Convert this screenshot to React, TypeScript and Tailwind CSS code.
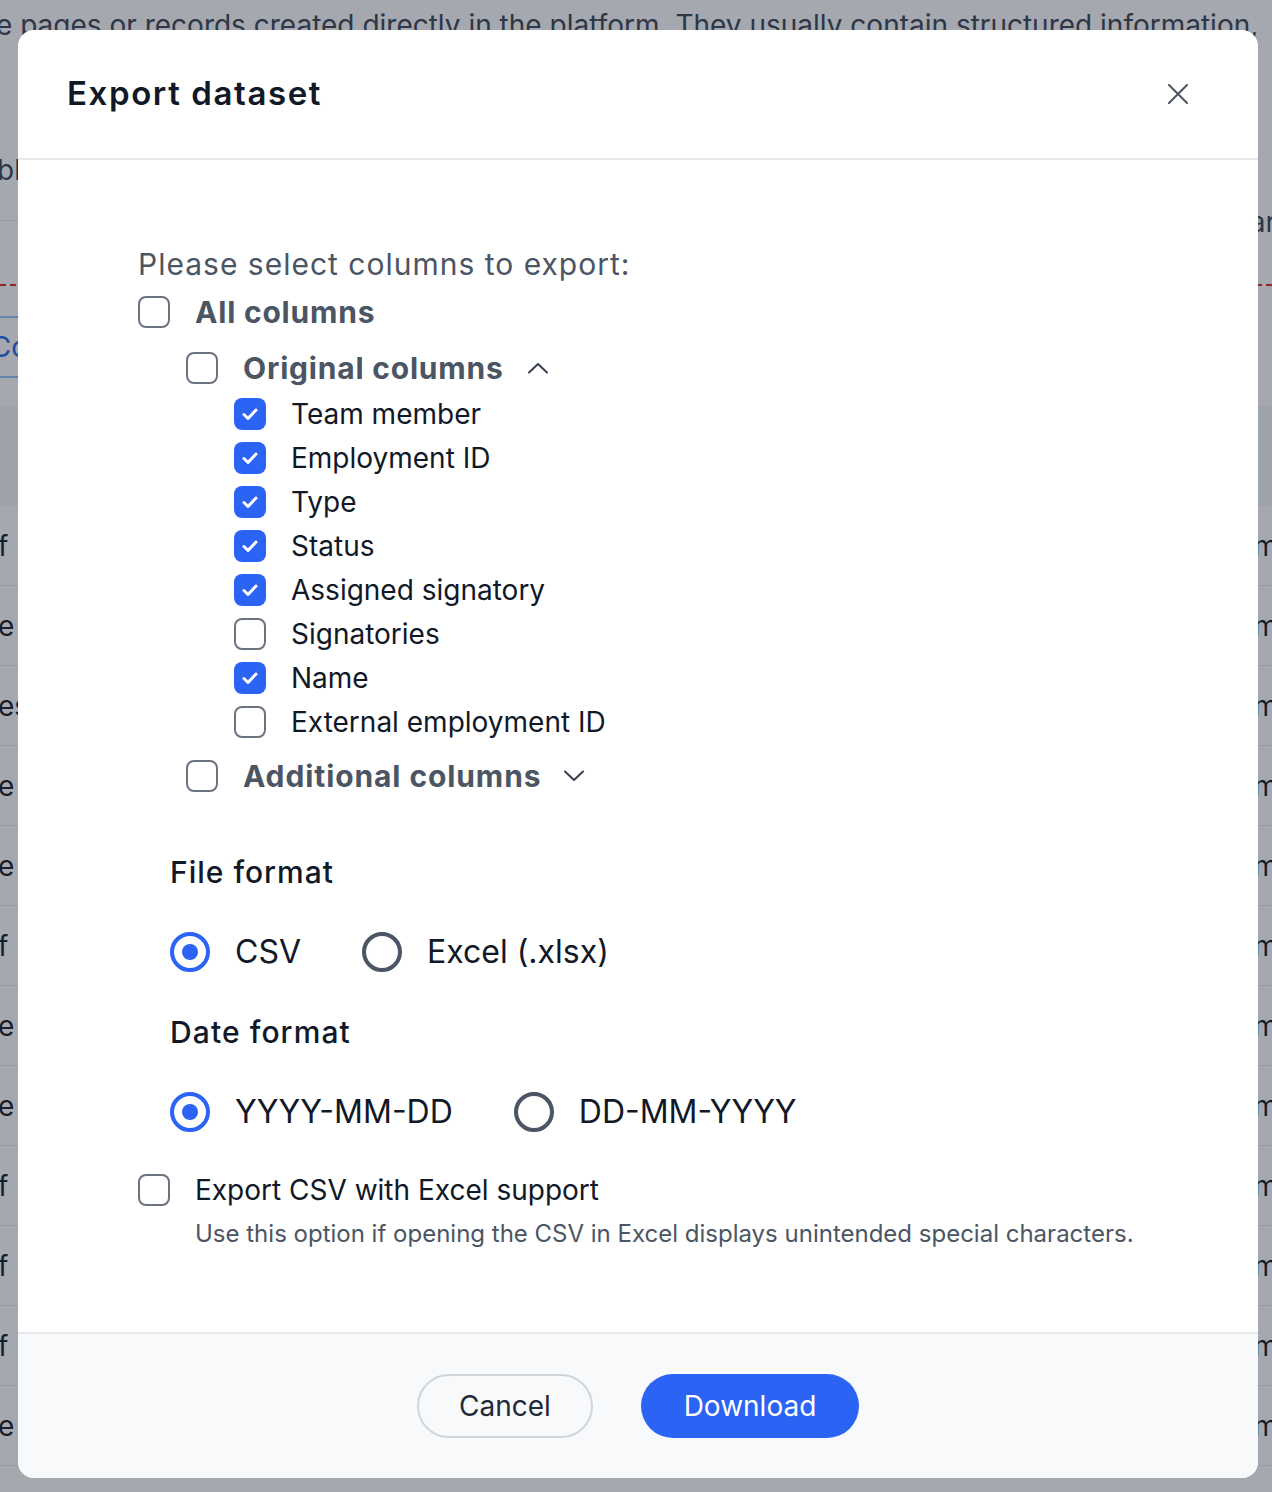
import { useState } from "react";

type Col = { label: string; checked: boolean };

const originalColumns: Col[] = [
  { label: "Team member", checked: true },
  { label: "Employment ID", checked: true },
  { label: "Type", checked: true },
  { label: "Status", checked: true },
  { label: "Assigned signatory", checked: true },
  { label: "Signatories", checked: false },
  { label: "Name", checked: true },
  { label: "External employment ID", checked: false },
];

const tableRows = ["f", "e", "es", "e", "e", "f", "e", "e", "f", "f", "f", "e"];

function Checkbox({ checked, onClick }: { checked: boolean; onClick?: () => void }) {
  if (checked) {
    return (
      <button onClick={onClick} className="flex h-8 w-8 shrink-0 items-center justify-center rounded-lg bg-[#2b63f5]">
        <svg width="32" height="32" viewBox="0 0 32 32" fill="none">
          <path d="M10 16.5l4 4 8-8.5" stroke="white" strokeWidth="3" strokeLinecap="round" strokeLinejoin="round" />
        </svg>
      </button>
    );
  }
  return <button onClick={onClick} className="h-8 w-8 shrink-0 rounded-lg border-2 border-[#6b7280] bg-white" />;
}

function Radio({ checked, label, onClick }: { checked: boolean; label: string; onClick: () => void }) {
  return (
    <button onClick={onClick} className="flex items-center gap-[25px]">
      {checked ? (
        <span className="flex h-10 w-10 items-center justify-center rounded-full border-4 border-[#2b63f5]">
          <span className="h-4 w-4 rounded-full bg-[#2b63f5]" />
        </span>
      ) : (
        <span className="h-10 w-10 rounded-full border-4 border-[#4b5563]" />
      )}
      <span className="text-[32px] text-[#111827]">{label}</span>
    </button>
  );
}

function Chevron({ up }: { up?: boolean }) {
  return (
    <svg width="20" height="12" viewBox="0 0 20 12" fill="none">
      <path d={up ? "M1 10.5L10 2l9 8.5" : "M1 1.5L10 10l9-8.5"} stroke="#374151" strokeWidth="2" strokeLinecap="round" strokeLinejoin="round" />
    </svg>
  );
}

export default function App() {
  const [cols, setCols] = useState(originalColumns);
  const [format, setFormat] = useState("csv");
  const [dateFmt, setDateFmt] = useState("ymd");
  const [excelSupport, setExcelSupport] = useState(false);

  const toggle = (i: number) => setCols(cols.map((c, j) => (j === i ? { ...c, checked: !c.checked } : c)));

  return (
    <div className="relative h-[1492px] w-[1272px] overflow-hidden bg-white font-[Inter,'Noto_Sans',sans-serif] text-[#1f2937]">
      {/* page behind the dialog */}
      <div className="flex h-[50px] items-center whitespace-nowrap text-[28px] text-[#374151]">
        <span className="-ml-[4px]">e pages or records created directly in the platform. They usually contain structured information,</span>
      </div>
      <div className="flex h-[170px] items-center pt-[70px] text-[28px] text-[#374151]">
        <span className="-ml-[3px]">bl</span>
      </div>
      <div className="flex h-[64px] items-start justify-end border-t border-[#e5e7eb] text-[28px] leading-[28px] text-[#374151]">
        <span className="-mr-[4px] -mt-[13px]">ar</span>
      </div>
      <div className="border-t-2 border-dashed border-[#dc2626]" />
      <div className="mt-[30px] flex h-[62px] w-[120px] -translate-x-[90px] items-center justify-end rounded-lg border-2 border-[#93c5fd] text-[28px] text-[#2563eb]">
        Co
      </div>
      <div className="mt-[28px] h-[100px] bg-[#f3f4f6]" />
      {tableRows.map((t, i) => (
        <div key={i} className="flex h-[80px] items-center justify-between border-b border-[#e5e7eb] text-[28px] text-[#111827]">
          <span className="-ml-[2px]">{t}</span>
          <span className="-mr-[6px]">m</span>
        </div>
      ))}

      {/* overlay + dialog */}
      <div className="absolute inset-0 bg-[#1f2937]/40 pl-[18px] pt-[30px]">
        <div className="flex h-[1448px] w-[1240px] flex-col overflow-hidden rounded-2xl bg-white">
          <div className="flex h-[130px] shrink-0 items-center justify-between border-b-2 border-[#e5e7eb] pl-[49px] pr-[62px]">
            <h1 className="text-[33px] font-semibold tracking-[1.6px] text-[#111827]">Export dataset</h1>
            <button className="flex h-[36px] w-[36px] items-center justify-center">
              <svg width="20" height="20" viewBox="0 0 20 20" fill="none">
                <path d="M1 1l18 18M19 1L1 19" stroke="#4b5563" strokeWidth="2" strokeLinecap="round" />
              </svg>
            </button>
          </div>

          <div className="flex-1 pl-[120px] pt-[84px]">
            <p className="h-[40px] text-[30px] leading-[40px] tracking-[1px] text-[#4b5563]">Please select columns to export:</p>

            <div className="flex h-[56px] items-center gap-[25px]">
              <Checkbox checked={false} />
              <span className="text-[30px] font-bold tracking-[0.8px] text-[#4b5563]">All columns</span>
            </div>

            <div className="flex h-[52px] items-center gap-[25px] pl-[48px] pt-[4px]">
              <Checkbox checked={false} />
              <span className="text-[30px] font-bold tracking-[0.8px] text-[#4b5563]">Original columns</span>
              <span className="-ml-[1px]">
                <Chevron up />
              </span>
            </div>

            <div className="pl-[96px]">
              {cols.map((c, i) => (
                <div key={c.label} className="flex h-[44px] items-center gap-[25px]">
                  <Checkbox checked={c.checked} onClick={() => toggle(i)} />
                  <span className="text-[28px] text-[#111827]">{c.label}</span>
                </div>
              ))}
            </div>

            <div className="flex h-[64px] items-center gap-[25px] pl-[48px]">
              <Checkbox checked={false} />
              <span className="text-[30px] font-bold tracking-[0.9px] text-[#4b5563]">Additional columns</span>
              <span className="-ml-[2px]">
                <Chevron />
              </span>
            </div>

            <div className="mt-[32px] pl-[32px]">
              <h2 className="flex h-[64px] items-center text-[30px] font-medium tracking-[1px] text-[#111827]">File format</h2>
              <div className="flex h-[96px] items-center gap-[61px]">
                <Radio checked={format === "csv"} label="CSV" onClick={() => setFormat("csv")} />
                <Radio checked={format === "xlsx"} label="Excel (.xlsx)" onClick={() => setFormat("xlsx")} />
              </div>
              <h2 className="flex h-[64px] items-center text-[30px] font-medium tracking-[1.1px] text-[#111827]">Date format</h2>
              <div className="flex h-[96px] items-center gap-[61px]">
                <Radio checked={dateFmt === "ymd"} label="YYYY-MM-DD" onClick={() => setDateFmt("ymd")} />
                <Radio checked={dateFmt === "dmy"} label="DD-MM-YYYY" onClick={() => setDateFmt("dmy")} />
              </div>
            </div>

            <div className="flex h-[60px] items-center gap-[25px]">
              <Checkbox checked={excelSupport} onClick={() => setExcelSupport(!excelSupport)} />
              <span className="text-[28px] text-[#111827]">Export CSV with Excel support</span>
            </div>
            <p className="h-[28px] pl-[57px] text-[24px] leading-[28px] text-[#4b5563]">
              Use this option if opening the CSV in Excel displays unintended special characters.
            </p>
          </div>

          <div className="flex h-[146px] shrink-0 items-center justify-center gap-[48px] border-t-2 border-[#e5e7eb] bg-[#f8f9fb]">
            <button className="h-16 w-[176px] rounded-full border-2 border-[#d1d5db] text-[28px] text-[#1f2937]">Cancel</button>
            <button className="h-16 w-[218px] rounded-full bg-[#2b63f5] text-[28px] text-white">Download</button>
          </div>
        </div>
      </div>
    </div>
  );
}
